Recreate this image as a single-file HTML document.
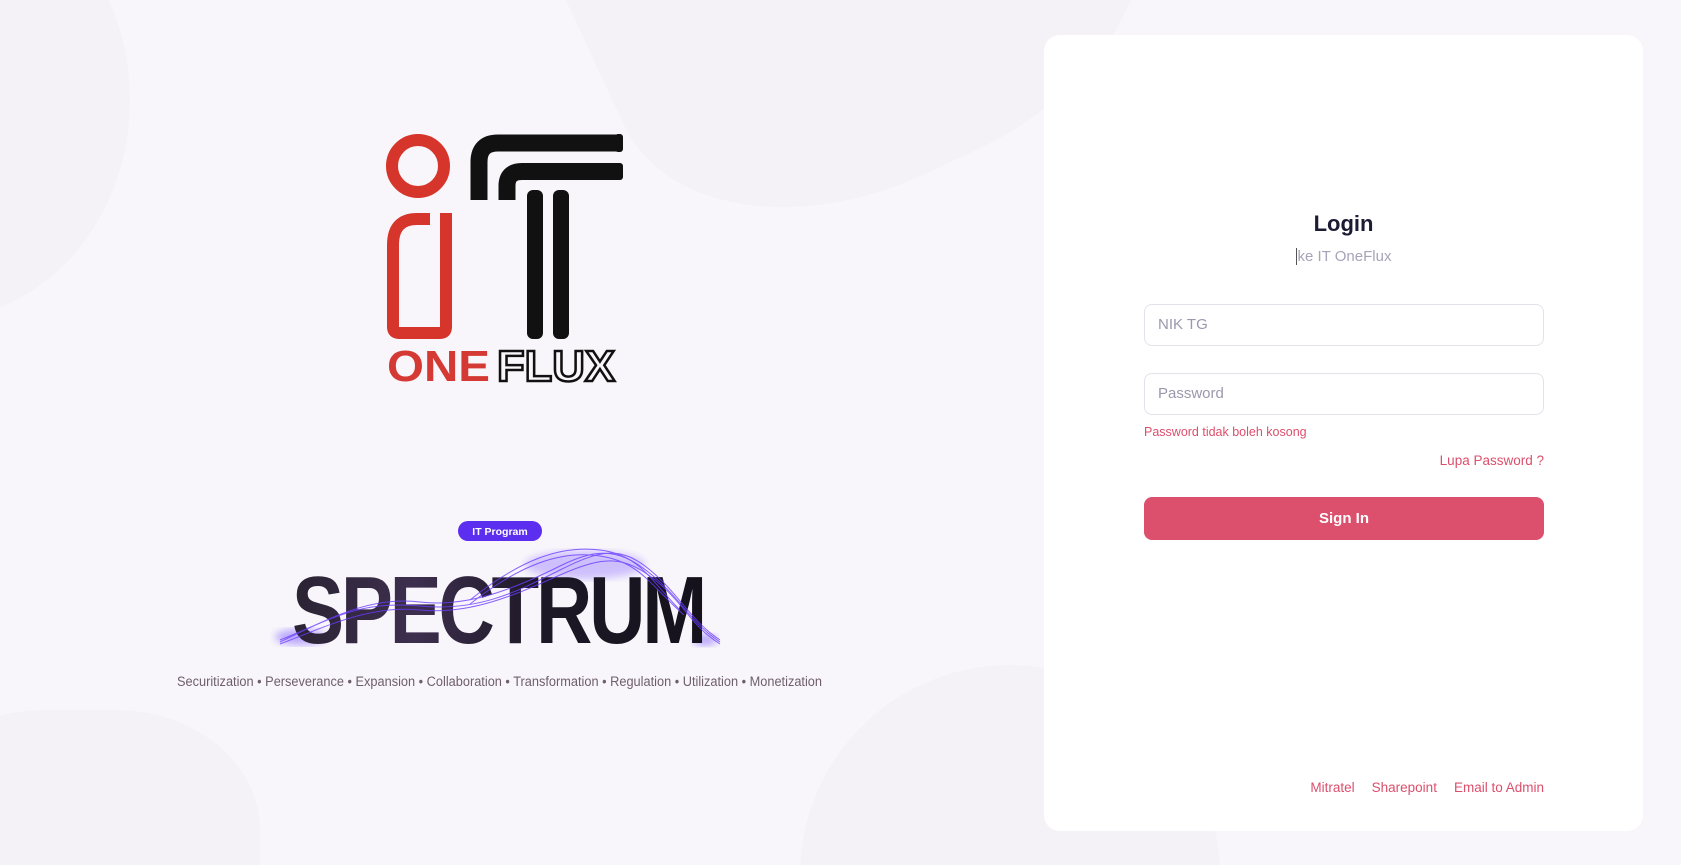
<!DOCTYPE html>
<html><head><meta charset="utf-8"><style>
html,body{margin:0;padding:0;width:1681px;height:865px;overflow:hidden}
body{background:#f9f6fb;position:relative;font-family:"Liberation Sans",sans-serif}
#wrap{position:absolute;left:0;top:0;width:1681px;height:865px;overflow:hidden}
.blob{position:absolute;background:#f4f2f7}
.card{position:absolute;left:1044px;top:35px;width:599px;height:796px;background:#fff;border-radius:16px}
.abs{position:absolute}
.inp{position:absolute;left:1144px;width:400px;height:42px;border:1px solid #e3e1ea;border-radius:8px;box-sizing:border-box;color:#9a98ad;font-size:15px;line-height:40px;padding-left:13px;background:#fff}
</style></head><body><div id="wrap">
<div class="blob" style="left:-260px;top:-120px;width:390px;height:440px;border-radius:50%"></div>
<div class="blob" style="left:590px;top:-200px;width:560px;height:380px;border-radius:0 0 45% 45%;transform:rotate(-25deg)"></div>
<div class="blob" style="left:-100px;top:710px;width:360px;height:300px;border-radius:40%"></div>
<div class="blob" style="left:800px;top:665px;width:420px;height:420px;border-radius:50%"></div>
<div class="card"></div>

<svg class="abs" style="left:0;top:0" width="1681" height="865" viewBox="0 0 1681 865">
<defs>
<linearGradient id="sg" x1="0" x2="1" y1="0" y2="0">
<stop offset="0" stop-color="#2a2333"/><stop offset="0.3" stop-color="#3d2f4e"/><stop offset="0.6" stop-color="#1d1826"/><stop offset="1" stop-color="#15121c"/></linearGradient>
<filter id="gl"><feGaussianBlur stdDeviation="4"/></filter>
</defs>
<circle cx="418" cy="166" r="26" fill="none" stroke="#d6352b" stroke-width="12"/>
<path d="M430 219 H417 Q393 219 393 245 V327 Q393 333 399 333 H440 Q446 333 446 327 V213" fill="none" stroke="#d6352b" stroke-width="12"/>
<path d="M479 200 V162 Q479 143 498 143 H619" fill="none" stroke="#111" stroke-width="17"/>
<path d="M507 200 V186 Q507 171.5 522 171.5 H619" fill="none" stroke="#111" stroke-width="17"/>
<rect x="615" y="134" width="8" height="18" rx="3" fill="#111"/>
<rect x="615" y="163" width="8" height="17" rx="3" fill="#111"/>
<rect x="527" y="190" width="16" height="149" rx="6" fill="#111"/>
<rect x="553" y="190" width="16" height="149" rx="6" fill="#111"/>
<text x="387" y="381" font-size="44" font-weight="bold" fill="#d43a33" textLength="103" lengthAdjust="spacingAndGlyphs">ONE</text>
<text x="497" y="381" font-size="44" font-weight="bold" fill="none" stroke="#111" stroke-width="2.5" textLength="118" lengthAdjust="spacingAndGlyphs">FLUX</text>

<rect x="458" y="521" width="84" height="20" rx="10" fill="#5b2ef0"/>
<text x="500" y="535" font-size="10.5" font-weight="bold" fill="#fff" text-anchor="middle">IT Program</text>

<ellipse cx="585" cy="565" rx="60" ry="14" fill="#7d5cff" opacity="0.35" filter="url(#gl)"/>
<ellipse cx="300" cy="637" rx="25" ry="8" fill="#7d5cff" opacity="0.5" filter="url(#gl)"/>
<ellipse cx="705" cy="640" rx="12" ry="6" fill="#7d5cff" opacity="0.5" filter="url(#gl)"/>
<text x="292" y="643" font-size="96" font-weight="900" fill="url(#sg)" textLength="412" lengthAdjust="spacingAndGlyphs" letter-spacing="-4">SPECTRUM</text>
<g fill="none" stroke="#6a3cff" stroke-width="1" opacity="0.8">
<path d="M280 640 C330 620 360 600 420 606 S520 590 560 570 S620 545 650 570 S690 620 720 640"/>
<path d="M280 642 C330 618 370 596 420 602 S520 586 560 566 S622 550 652 575 S690 622 720 642"/>
<path d="M280 644 C330 625 370 605 420 610 S515 595 560 575 S625 556 655 580 S690 625 720 644"/>
<path d="M470 600 C520 560 560 545 600 550 S650 580 680 610"/>
<path d="M470 604 C520 565 560 550 600 556 S650 585 684 615"/>
</g>
<text x="177" y="686" font-size="13.5" fill="#6e5e6c" textLength="645" lengthAdjust="spacingAndGlyphs">Securitization • Perseverance • Expansion • Collaboration • Transformation • Regulation • Utilization • Monetization</text>
</svg>

<div class="abs" style="left:1044px;width:599px;top:211px;text-align:center;font-size:22px;font-weight:bold;color:#1b1c33">Login</div>
<div class="abs" style="left:1044px;width:599px;top:248px;text-align:center;font-size:15px;color:#a6a4b8"><span style="border-left:1px solid #555;padding-left:1px">ke IT OneFlux</span></div>
<div class="inp" style="top:304px">NIK TG</div>
<div class="inp" style="top:373px">Password</div>
<div class="abs" style="left:1144px;top:425px;font-size:12.5px;color:#dc4f6c">Password tidak boleh kosong</div>
<div class="abs" style="left:1144px;width:400px;top:453px;text-align:right;font-size:13.5px;color:#dc4f6c">Lupa Password ?</div>
<div class="abs" style="left:1144px;top:497px;width:400px;height:43px;border-radius:8px;background:#dc506d;color:#fff;font-weight:bold;font-size:15px;line-height:43px;text-align:center">Sign In</div>
<div class="abs" style="left:1144px;width:400px;top:780px;text-align:right;font-size:13.5px;color:#dc4f6c;word-spacing:0">Mitratel<span style="display:inline-block;width:17px"></span>Sharepoint<span style="display:inline-block;width:17px"></span>Email to Admin</div>
</div></body></html>
